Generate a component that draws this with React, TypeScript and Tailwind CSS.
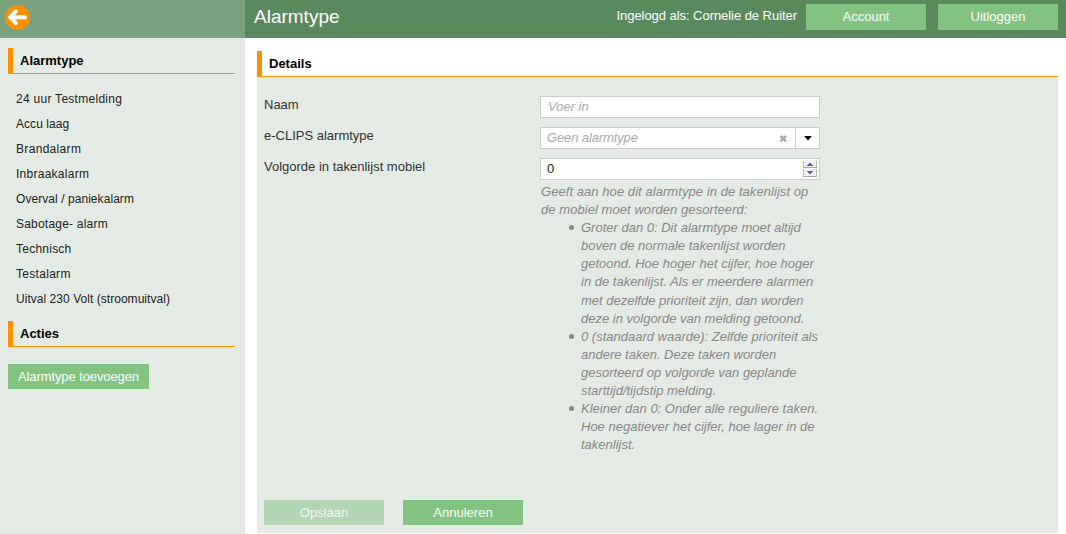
import React from "react";

const alarmTypes = [
  { name: "24 uur Testmelding", tracking: "tracking-[0.28px]" },
  { name: "Accu laag", tracking: "tracking-[0.05px]" },
  { name: "Brandalarm", tracking: "tracking-[0.32px]" },
  { name: "Inbraakalarm", tracking: "tracking-[0.26px]" },
  { name: "Overval / paniekalarm", tracking: "tracking-[0.06px]" },
  { name: "Sabotage- alarm", tracking: "tracking-[0.21px]" },
  { name: "Technisch", tracking: "tracking-[0.24px]" },
  { name: "Testalarm", tracking: "tracking-[0.3px]" },
  { name: "Uitval 230 Volt (stroomuitval)", tracking: "tracking-[0.04px]" },
];

const hints = [
  [
    "Groter dan 0: Dit alarmtype moet altijd",
    "boven de normale takenlijst worden",
    "getoond. Hoe hoger het cijfer, hoe hoger",
    "in de takenlijst. Als er meerdere alarmen",
    "met dezelfde prioriteit zijn, dan worden",
    "deze in volgorde van melding getoond.",
  ],
  [
    "0 (standaard waarde): Zelfde prioriteit als",
    "andere taken. Deze taken worden",
    "gesorteerd op volgorde van geplande",
    "starttijd/tijdstip melding.",
  ],
  [
    "Kleiner dan 0: Onder alle reguliere taken.",
    "Hoe negatiever het cijfer, hoe lager in de",
    "takenlijst.",
  ],
];

function Heading({ children }: { children: React.ReactNode }) {
  return (
    <h2 className="h-[26px] border-b border-l-[5px] border-[#fb9000] pl-[7px] text-[13px] leading-[25px] font-bold text-black">
      {children}
    </h2>
  );
}

function Button({ children, className }: { children: React.ReactNode; className: string }) {
  return (
    <button className={`shrink-0 bg-[#82c382] text-center text-[13px] whitespace-nowrap text-white ${className}`}>
      {children}
    </button>
  );
}

function BackIcon() {
  return (
    <svg width="26" height="26" viewBox="0 0 26 26" className="block">
      <circle cx="12.6" cy="12.5" r="12.5" fill="#fb9000" />
      <path
        d="M20 12.2H6M10.8 6.4L5 12.2L10.8 18"
        fill="none"
        stroke="#fff"
        strokeWidth="3.9"
        strokeLinecap="round"
        strokeLinejoin="round"
      />
    </svg>
  );
}

function Spinner() {
  return (
    <svg width="15" height="18" viewBox="0 0 15 18" shapeRendering="crispEdges">
      <rect x="0" y="0" width="14" height="17" fill="#f1f1f1" />
      <path d="M0.5 1V16.5M13.5 1V16.5" fill="none" stroke="#b8b8b8" />
      <path d="M0 7.5H14M0 16.5H14" stroke="#a5a5a5" />
      <path d="M0 8.5H14" stroke="#fff" />
      <path d="M6 3h2v1h1v1h1v1H4V5h1V4h1zM4 11h6v1H9v1H8v1H6v-1H5v-1H4z" fill="#5366b5" />
    </svg>
  );
}

export default function App() {
  return (
    <div className="flex h-[534px] w-[1066px] overflow-hidden bg-white font-['Liberation_Sans',Arial,sans-serif]">
      <aside className="w-[245px] shrink-0 bg-[#e4ebe4]">
        <div className="h-[38px] bg-[#7ca17e] pt-[5px] pl-[5px]">
          <BackIcon />
        </div>
        <div className="pt-[10px] pr-[10px] pl-2">
          <Heading>Alarmtype</Heading>
          <ul className="mt-[13px] mb-[9px] pl-2">
            {alarmTypes.map(({ name, tracking }) => (
              <li key={name} className={`h-[25px] text-xs leading-[25px] whitespace-nowrap text-[#222] ${tracking}`}>
                {name}
              </li>
            ))}
          </ul>
          <Heading>Acties</Heading>
          <Button className="mt-[17px] h-[25px] w-[141px] tracking-[-0.1px]">Alarmtype toevoegen</Button>
        </div>
      </aside>

      <main className="flex min-w-0 flex-1 flex-col">
        <header className="flex h-[38px] shrink-0 items-start bg-[#5a895d] pr-2 pl-[9px] text-white">
          <h1 className="flex-1 text-[19px] leading-[34px]">Alarmtype</h1>
          <span className="mr-[9px] text-[13px] leading-[31px] tracking-[-0.05px]">Ingelogd als: Cornelie de Ruiter</span>
          <Button className="mt-1 mr-3 h-[26px] w-[120px]">Account</Button>
          <Button className="mt-1 h-[26px] w-[120px]">Uitloggen</Button>
        </header>

        <section className="mt-[13px] mr-2 ml-3 flex h-[482px] flex-col">
          <Heading>Details</Heading>
          <div className="flex flex-1 flex-col bg-[#e4ebe4] pl-[7px]">
            <div className="mt-[19px] grid grid-cols-[276px_280px] gap-y-[9px] text-[13px] text-[#333]">
              <label className="leading-[18px]">Naam</label>
              <div className="h-[22px] border border-[#ccc] bg-white pl-[7px] leading-5 text-[#aaa] italic">Voer in</div>

              <label className="leading-[18px]">e-CLIPS alarmtype</label>
              <div className="flex h-[22px] border border-[#ccc] bg-white pl-[6px] leading-5 text-[#aaa] italic">
                <span className="flex-1 tracking-[-0.12px]">Geen alarmtype</span>
                <svg width="9" height="9" viewBox="0 0 9 9" className="mt-[6px] mr-[7px]">
                  <path d="M1.5 1.8L7 7.3M7 1.8L1.5 7.3" stroke="#aaa" strokeWidth="2.4" />
                </svg>
                <div className="flex w-6 justify-center border-l border-[#ccc] pt-2">
                  <svg width="8" height="5" viewBox="0 0 8 5">
                    <path d="M0 0h8L4 4.5z" fill="#000" />
                  </svg>
                </div>
              </div>

              <label className="leading-[18px]">Volgorde in takenlijst mobiel</label>
              <div className="flex h-[22px] justify-between border border-[#ccc] bg-white pt-px pr-px pl-[6px] leading-[18px] text-[#222]">
                <span>0</span>
                <Spinner />
              </div>
            </div>

            <div className="mt-[3px] ml-[277px] text-[13px] leading-[18.1px] whitespace-nowrap text-[#888] italic">
              <p className="tracking-[0.06px]">
                Geeft aan hoe dit alarmtype in de takenlijst op
                <br />
                de mobiel moet worden gesorteerd:
              </p>
              <ul className="pl-[28px]">
                {hints.map((lines) => (
                  <li key={lines[0]} className="flex">
                    <span className="mt-[6px] mr-[7px] h-[5px] w-[5px] shrink-0 rounded-full bg-[#888]" />
                    <span>
                      {lines.map((line) => (
                        <span key={line} className="block">
                          {line}
                        </span>
                      ))}
                    </span>
                  </li>
                ))}
              </ul>
            </div>

            <div className="mt-auto mb-2 flex gap-[19px]">
              <Button className="h-[25px] w-[120px] opacity-50">Opslaan</Button>
              <Button className="h-[25px] w-[120px]">Annuleren</Button>
            </div>
          </div>
        </section>
      </main>
    </div>
  );
}
